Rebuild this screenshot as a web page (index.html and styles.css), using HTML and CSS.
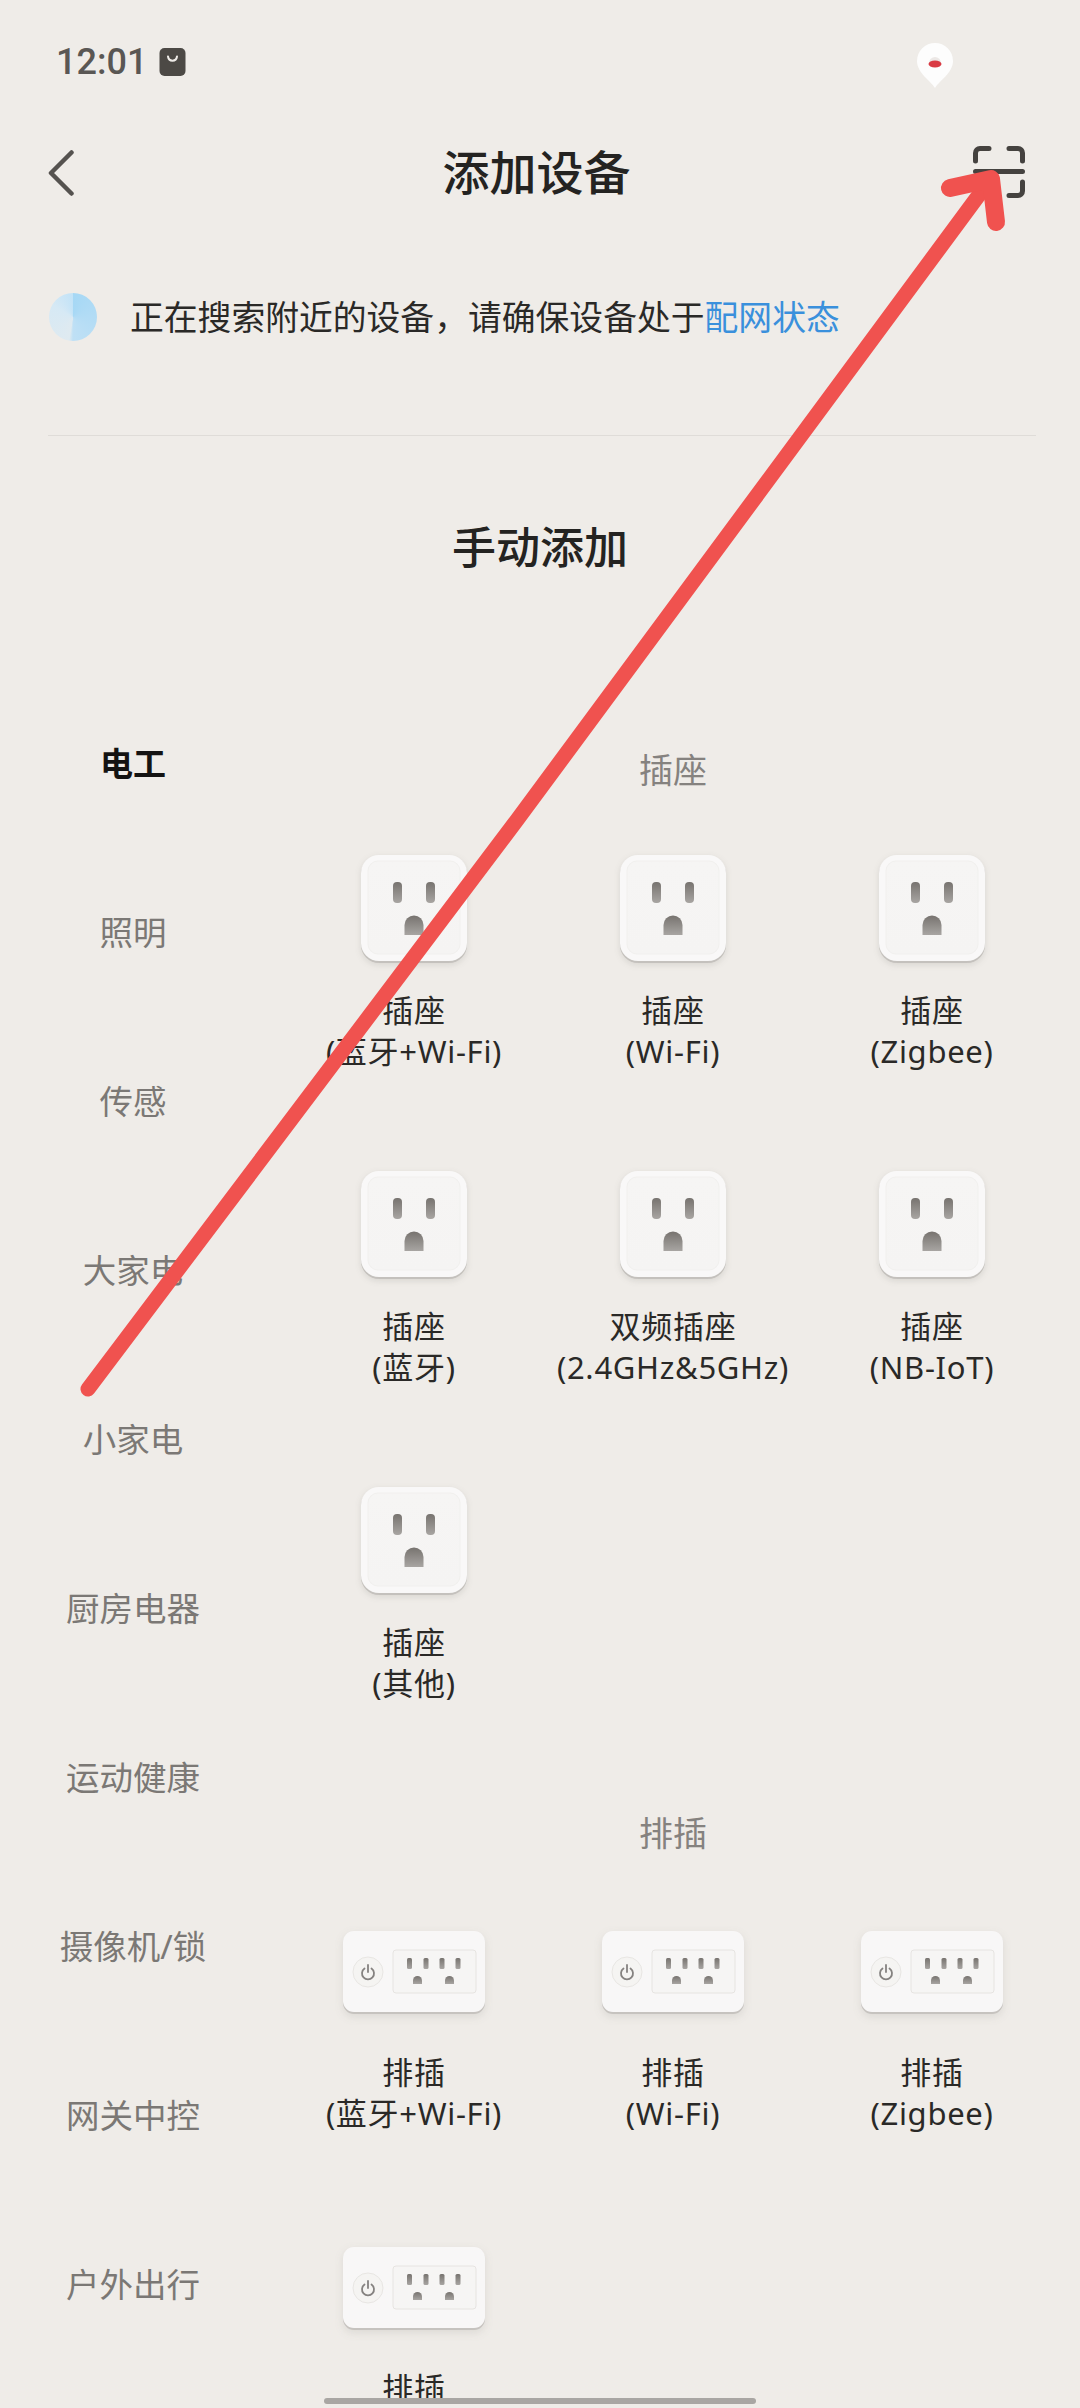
FILE: index.html
```html
<!DOCTYPE html>
<html lang="zh">
<head>
<meta charset="utf-8">
<title>添加设备</title>
<link rel="stylesheet" href="styles.css">
</head>
<body>
<svg class="defs" width="0" height="0" aria-hidden="true">
  <defs>
    <linearGradient id="hole" x1="0" y1="0" x2="0" y2="1">
      <stop offset="0" stop-color="#77736f"/>
      <stop offset="1" stop-color="#a8a5a2"/>
    </linearGradient>
    <linearGradient id="face" x1="0" y1="0" x2="0" y2="1">
      <stop offset="0" stop-color="#f6f5f4"/>
      <stop offset="1" stop-color="#f5f4f3"/>
    </linearGradient>
    <symbol id="socket" viewBox="0 0 106 108">
      <rect x="0" y="1" width="106" height="107" rx="18" fill="#c4c1bd"/>
      <rect x="0" y="0" width="106" height="106" rx="18" fill="#f9f8f8"/>
      <rect x="7" y="6" width="92" height="93" rx="10" fill="url(#face)" stroke="#f1f0ee" stroke-width="1"/>
      <rect x="32" y="27" width="9" height="21" rx="4" fill="url(#hole)"/>
      <rect x="65" y="27" width="9" height="21" rx="4" fill="url(#hole)"/>
      <path d="M43.500 80V70a9.500 9.500 0 0 1 19 0v10z" fill="url(#hole)"/>
    </symbol>
    <symbol id="strip" viewBox="0 0 142 83">
      <rect x="0" y="1" width="142" height="82" rx="11" fill="#c6c3bf"/>
      <rect x="0" y="0" width="142" height="81" rx="11" fill="#f8f7f7"/>
      <circle cx="25" cy="41" r="15" fill="#f5f4f2" stroke="#e8e6e3"/>
      <path d="M21.500 37.500a6 6 0 1 0 7 0M25 34v7" fill="none" stroke="#858280" stroke-width="1.800" stroke-linecap="round"/>
      <rect x="50" y="19" width="83" height="43" rx="3" fill="#f6f5f4" stroke="#e6e4e1"/>
      <rect x="64" y="27" width="5" height="11" rx="1.500" fill="url(#hole)"/>
      <rect x="80.500" y="27" width="5" height="11" rx="1.500" fill="url(#hole)"/>
      <rect x="96.500" y="27" width="5" height="11" rx="1.500" fill="url(#hole)"/>
      <rect x="112.500" y="27" width="5" height="11" rx="1.500" fill="url(#hole)"/>
      <path d="M70 53v-3.500a4.500 4.500 0 0 1 9 0V53z" fill="url(#hole)"/>
      <path d="M102 53v-3.500a4.500 4.500 0 0 1 9 0V53z" fill="url(#hole)"/>
    </symbol>
  </defs>
</svg>

<div class="page">
  <header class="status">
    <div class="status-left">
      <span class="time">12:01</span>
      <svg class="bag" viewBox="0 0 26 28"><rect width="26" height="28" rx="5" fill="#4c4945"/><path d="M8.500 8.500c.8 5.500 8.200 5.500 9 0" fill="none" stroke="#efece8" stroke-width="2" stroke-linecap="round"/></svg>
    </div>
    <svg class="pin" viewBox="0 0 36 46"><path d="M18 45C14 38 0 30 0 18a18 18 0 0 1 36 0c0 12-14 20-18 27z" fill="#fdfdfd"/><path d="M12 20a6 6 0 0 1 12 0z" fill="#ece8e6"/><ellipse cx="18" cy="21" rx="6.500" ry="3.500" fill="#d93a43"/></svg>
  </header>

  <nav class="nav">
    <svg class="back" viewBox="0 0 26 46"><path d="M23.500 2.500 3 23l20.500 20.500" fill="none" stroke="#55524f" stroke-width="4.500" stroke-linecap="round" stroke-linejoin="round"/></svg>
    <h1 class="nav-title">添加设备</h1>
    <svg class="scan" viewBox="0 0 52 52"><path d="M2.500 15V7a4.500 4.500 0 0 1 4.500-4.500h9M36 2.500h9A4.500 4.500 0 0 1 49.500 7v8M2.500 25.500h47M49.500 36v9a4.500 4.500 0 0 1-4.500 4.500h-9M16 49.500H7A4.500 4.500 0 0 1 2.500 45v-9" fill="none" stroke="#45423f" stroke-width="5" stroke-linecap="round"/></svg>
  </nav>

  <section class="search">
    <span class="spinner"></span>
    <p class="search-text">正在搜索附近的设备&#xFF0C;请确保设备处于<span class="link">配网状态</span></p>
  </section>
  <hr class="divider">

  <h2 class="manual">手动添加</h2>

  <div class="body">
    <aside class="side">
      <div class="side-item active">电工</div>
      <div class="side-item">照明</div>
      <div class="side-item">传感</div>
      <div class="side-item">大家电</div>
      <div class="side-item">小家电</div>
      <div class="side-item">厨房电器</div>
      <div class="side-item">运动健康</div>
      <div class="side-item">摄像机/锁</div>
      <div class="side-item">网关中控</div>
      <div class="side-item">户外出行</div>
    </aside>

    <main class="main">
      <h3 class="cat">插座</h3>
      <div class="grid">
        <div class="item"><svg class="ico-socket"><use href="#socket"/></svg><div class="label">插座<br>(蓝牙+Wi-Fi)</div></div>
        <div class="item"><svg class="ico-socket"><use href="#socket"/></svg><div class="label">插座<br>(Wi-Fi)</div></div>
        <div class="item"><svg class="ico-socket"><use href="#socket"/></svg><div class="label">插座<br>(Zigbee)</div></div>
        <div class="item"><svg class="ico-socket"><use href="#socket"/></svg><div class="label">插座<br>(蓝牙)</div></div>
        <div class="item"><svg class="ico-socket"><use href="#socket"/></svg><div class="label">双频插座<br>(2.4GHz&amp;5GHz)</div></div>
        <div class="item"><svg class="ico-socket"><use href="#socket"/></svg><div class="label">插座<br>(NB-IoT)</div></div>
        <div class="item"><svg class="ico-socket"><use href="#socket"/></svg><div class="label">插座<br>(其他)</div></div>
      </div>

      <h3 class="cat cat-strip">排插</h3>
      <div class="grid grid-strip">
        <div class="item"><svg class="ico-strip"><use href="#strip"/></svg><div class="label">排插<br>(蓝牙+Wi-Fi)</div></div>
        <div class="item"><svg class="ico-strip"><use href="#strip"/></svg><div class="label">排插<br>(Wi-Fi)</div></div>
        <div class="item"><svg class="ico-strip"><use href="#strip"/></svg><div class="label">排插<br>(Zigbee)</div></div>
        <div class="item"><svg class="ico-strip"><use href="#strip"/></svg><div class="label label-cut">排插</div></div>
      </div>
    </main>
  </div>

  <svg class="arrow" viewBox="0 0 1080 2408" aria-hidden="true">
    <path d="M88 1389 517 820 990 180" fill="none" stroke="#f0524f" stroke-width="15" stroke-linecap="round" stroke-linejoin="round"/>
    <path d="M950 188 991 179 996 222" fill="none" stroke="#f0524f" stroke-width="18" stroke-linecap="round" stroke-linejoin="round"/>
  </svg>
  <div class="home-bar"></div>
</div>
</body>
</html>
```

FILE: styles.css
```css
* { box-sizing: border-box; }
html, body { margin: 0; padding: 0; }
body {
  width: 1080px;
  height: 2408px;
  overflow: hidden;
  background: #efece8;
  font-family: "Noto Sans", "Noto Sans CJK SC", sans-serif;
  color: #232220;
}
.defs { position: absolute; }
.page { position: relative; width: 1080px; height: 2408px; overflow: hidden; }

.status {
  height: 124px;
  padding: 0 127px 0 56px;
  display: flex;
  align-items: center;
  justify-content: space-between;
}
.status-left { display: flex; align-items: center; gap: 12px; }
.time { font-family: Roboto, sans-serif; font-size: 36px; font-weight: 500; color: #5a5754; }
.bag { width: 27px; height: 28px; }
.pin { width: 36px; height: 46px; margin-top: 8px; }

.nav {
  height: 98px;
  padding: 0 55px 0 48px;
  display: grid;
  grid-template-columns: 1fr auto 1fr;
  align-items: center;
}
.back { width: 26px; height: 46px; }
.nav-title { margin: 0 0 2px; font-size: 47px; font-weight: 500; line-height: 60px; color: #242321; }
.scan { width: 52px; height: 52px; justify-self: end; margin-bottom: 3px; }

.search {
  height: 190px;
  margin-bottom: 23px;
  padding-left: 49px;
  display: flex;
  align-items: center;
  gap: 33px;
}
.spinner {
  width: 48px;
  height: 48px;
  border-radius: 50%;
  background: conic-gradient(#a6d8f5 0deg, #bfe0f5 180deg, #dfeaf0 190deg, #d6e9f5 300deg, #c3e3f7 360deg);
}
.search-text { margin: 0; font-size: 33.800px; line-height: 48px; color: #2a2927; }
.link { color: #3a90dc; }

.divider { margin: 0 44px 0 48px; height: 1px; border: 0; background: #dfdcd8; }

.manual {
  margin: 0;
  height: 241px;
  padding-bottom: 23px;
  display: flex;
  align-items: center;
  justify-content: center;
  font-size: 44px;
  font-weight: 500;
  color: #242321;
}

.body { display: flex; }
.side { width: 266px; flex: none; }
.side-item {
  height: 169px;
  display: flex;
  align-items: center;
  justify-content: center;
  font-size: 33.500px;
  color: #7b7875;
}
.side-item.active { color: #141312; font-weight: 700; font-size: 33px; }

.main { flex: 1; padding: 69px 18.500px 0; }
.cat {
  margin: 0 0 61px;
  font-size: 34px;
  line-height: 48px;
  font-weight: 400;
  text-align: center;
  color: #85827f;
}
.cat-strip { margin: 105px 0 74px; }

.grid { display: grid; grid-template-columns: repeat(3, 259px); row-gap: 99px; }
.grid-strip { row-gap: 113px; }
.item { display: flex; flex-direction: column; align-items: center; }
.ico-socket { width: 106px; height: 108px; margin-bottom: 27px; filter: drop-shadow(0 2px 3px rgba(60, 55, 50, 0.12)); }
.ico-strip { width: 142px; height: 83px; margin-bottom: 38px; filter: drop-shadow(0 3px 4px rgba(60, 55, 50, 0.1)); }
.label {
  font-size: 31px;
  line-height: 41px;
  height: 82px;
  letter-spacing: 0.7px;
  white-space: nowrap;
  text-align: center;
  color: #2a2927;
}
.label-cut { height: 41px; }

.arrow { position: absolute; left: 0; top: 0; width: 1080px; height: 2408px; pointer-events: none; }
.home-bar {
  position: absolute;
  left: 324px;
  bottom: 4px;
  width: 432px;
  height: 6px;
  border-radius: 3px;
  background: #a9a6a3;
}
```
